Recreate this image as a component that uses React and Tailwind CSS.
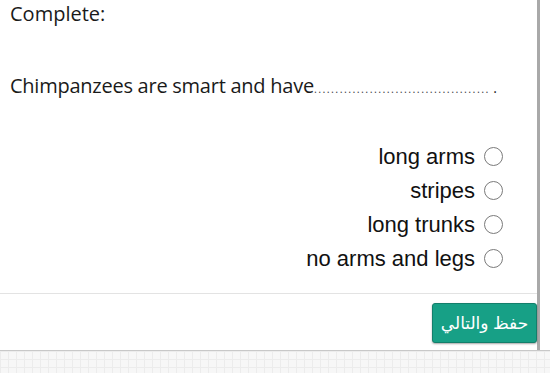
import React from 'react';

const options = ['long arms', 'stripes', 'long trunks', 'no arms and legs'];

export default function App() {
  return (
    <div className="w-[550px] h-[373px] bg-white overflow-hidden flex flex-col">
      <div className="w-[540px] border-r-[3px] border-[#a9a9a9] flex flex-col">
        <div className="h-[293px] flex flex-col">
          <p className="pl-[10px] pt-[1px] text-[20px] leading-[26px] text-[#1a1a1a]" style={{ fontFamily: '"Open Sans", sans-serif' }}>
            Complete:
          </p>
          <p className="pl-[10px] mt-[46px] text-[20px] leading-[26px] text-[#1a1a1a] whitespace-nowrap tracking-[-0.25px]" style={{ fontFamily: '"Open Sans", sans-serif' }}>
            Chimpanzees are smart and have
            <span className="text-[11px] tracking-[1.4px] text-[#444]">.........................................</span>
            <span className="text-[14px]"> .</span>
          </p>
          <div className="mt-[42px] pr-[34px] flex flex-col items-end gap-[9px]">
            {options.map((o) => (
              <label key={o} className="flex items-center gap-[9px] h-[25px]">
                <span className="text-[22px] text-[#111]" style={{ fontFamily: '"Liberation Sans", Arial, sans-serif' }}>{o}</span>
                <span className="w-[19px] h-[19px] rounded-full border-[1.5px] border-[#7a7a7a] bg-white" />
              </label>
            ))}
          </div>
        </div>
        <div className="border-t border-[#e3e3e3] h-[57px] flex items-start justify-end pt-[9px]">
          <button
            className="w-[105px] h-[40px] bg-[#17a086] border border-[#137f6b] rounded-[3px] text-white text-[17px] shadow-[0_1px_2px_rgba(0,0,0,0.35)]"
            style={{ fontFamily: '"Noto Sans", "DejaVu Sans", sans-serif' }}
            dir="rtl"
          >
            حفظ والتالي
          </button>
        </div>
      </div>
      <div className="flex-1 border-t border-[#c8c8c8] bg-[#f7f7f7] bg-[linear-gradient(#ececec_1px,transparent_1px),linear-gradient(90deg,#ececec_1px,transparent_1px)] bg-[size:8px_8px]" />
    </div>
  );
}
